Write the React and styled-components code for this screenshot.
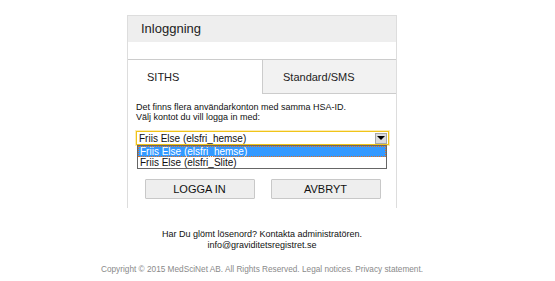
import React from 'react';
import styled, { createGlobalStyle } from 'styled-components';

const GlobalStyle = createGlobalStyle`
  body {
    margin: 0;
    background: #ffffff;
    font-family: "Liberation Sans", Arial, sans-serif;
    color: #111;
  }
`;

const Page = styled.div`
  width: 524px;
  padding-top: 15px;
  display: flex;
  flex-direction: column;
  align-items: center;
`;

const Panel = styled.div`
  width: 268px;
  border: 1px solid #dddddd;
  border-bottom: none;
  background: #ffffff;
`;

const Header = styled.div`
  height: 26px;
  line-height: 26px;
  padding-left: 13px;
  background: #eeeeee;
  font-size: 13px;
  color: #222;
`;

const Tabs = styled.div`
  margin-top: 17px;
  display: grid;
  grid-template-columns: 134px 1fr;
`;

const Tab = styled.div`
  height: 33px;
  line-height: 35px;
  padding-left: ${(p) => (p.$active ? '19px' : '20px')};
  font-size: 11px;
  color: #222;
  border-top: 1px solid #cccccc;
  background: ${(p) => (p.$active ? '#ffffff' : '#f2f2f2')};
  border-left: ${(p) => (p.$active ? 'none' : '1px solid #cccccc')};
  border-bottom: 1px solid ${(p) => (p.$active ? 'transparent' : '#cccccc')};
`;

const Body = styled.div`
  padding: 8px 7px 9px 8px;
  display: flex;
  flex-direction: column;
`;

const Info = styled.p`
  margin: 0;
  font-size: 9px;
  line-height: 10px;
  color: #111;
`;

const SelectBox = styled.div`
  margin-top: 9px;
  height: 12px;
  border: 1px solid #f0c419;
  box-shadow: 0 0 0 1px rgba(250, 220, 120, 0.55);
  display: flex;
  align-items: center;
  justify-content: space-between;
  padding-left: 2px;
  font-size: 10px;
  color: #111;
`;

const Arrow = styled.span`
  width: 12px;
  height: 11px;
  margin-right: 1px;
  background: #dcdcdc;
  border: 1px solid #a8a8a8;
  box-sizing: border-box;
  display: flex;
  align-items: center;
  justify-content: center;

  &::after {
    content: '';
    border-left: 4px solid transparent;
    border-right: 4px solid transparent;
    border-top: 4px solid #000;
  }
`;

const OptionList = styled.div`
  margin: 0 2px 0 1px;
  border: 1px solid #666666;
  display: flex;
  flex-direction: column;
`;

const Option = styled.div`
  height: 11px;
  line-height: 11px;
  padding-left: 2px;
  font-size: 10px;
  color: ${(p) => (p.$selected ? '#ffffff' : '#111')};
  background: ${(p) => (p.$selected ? '#3399ff' : '#ffffff')};
  outline: ${(p) => (p.$selected ? '1px dotted #e07020' : 'none')};
  outline-offset: -1px;
`;

const Buttons = styled.div`
  margin-top: 10px;
  display: flex;
  justify-content: center;
  gap: 16px;
`;

const Button = styled.button`
  width: 110px;
  height: 20px;
  padding: 0;
  border: 1px solid #c8c8c8;
  border-radius: 1px;
  background: #eeeeee;
  font-family: "Liberation Sans", Arial, sans-serif;
  font-size: 11px;
  color: #111;
`;

const Help = styled.div`
  margin-top: 21px;
  font-size: 9px;
  line-height: 11px;
  text-align: center;
  color: #111;
`;

const Copyright = styled.div`
  margin-top: 14px;
  font-size: 8.25px;
  color: #8a8a8a;
  text-align: center;
`;

const App = () => {
  const accounts = ['Friis Else (elsfri_hemse)', 'Friis Else (elsfri_Slite)'];

  return (
    <>
      <GlobalStyle />
      <Page>
        <Panel>
          <Header>Inloggning</Header>
          <Tabs>
            <Tab $active>SITHS</Tab>
            <Tab>Standard/SMS</Tab>
          </Tabs>
          <Body>
            <Info>
              Det finns flera användarkonton med samma HSA-ID.
              <br />
              Välj kontot du vill logga in med:
            </Info>
            <SelectBox>
              <span>{accounts[0]}</span>
              <Arrow />
            </SelectBox>
            <OptionList>
              {accounts.map((a, i) => (
                <Option key={a} $selected={i === 0}>
                  {a}
                </Option>
              ))}
            </OptionList>
            <Buttons>
              <Button type='button'>LOGGA IN</Button>
              <Button type='button'>AVBRYT</Button>
            </Buttons>
          </Body>
        </Panel>
        <Help>
          Har Du glömt lösenord? Kontakta administratören.
          <br />
          info@graviditetsregistret.se
        </Help>
        <Copyright>
          Copyright © 2015 MedSciNet AB. All Rights Reserved. Legal notices. Privacy statement.
        </Copyright>
      </Page>
    </>
  );
};

export default App;
